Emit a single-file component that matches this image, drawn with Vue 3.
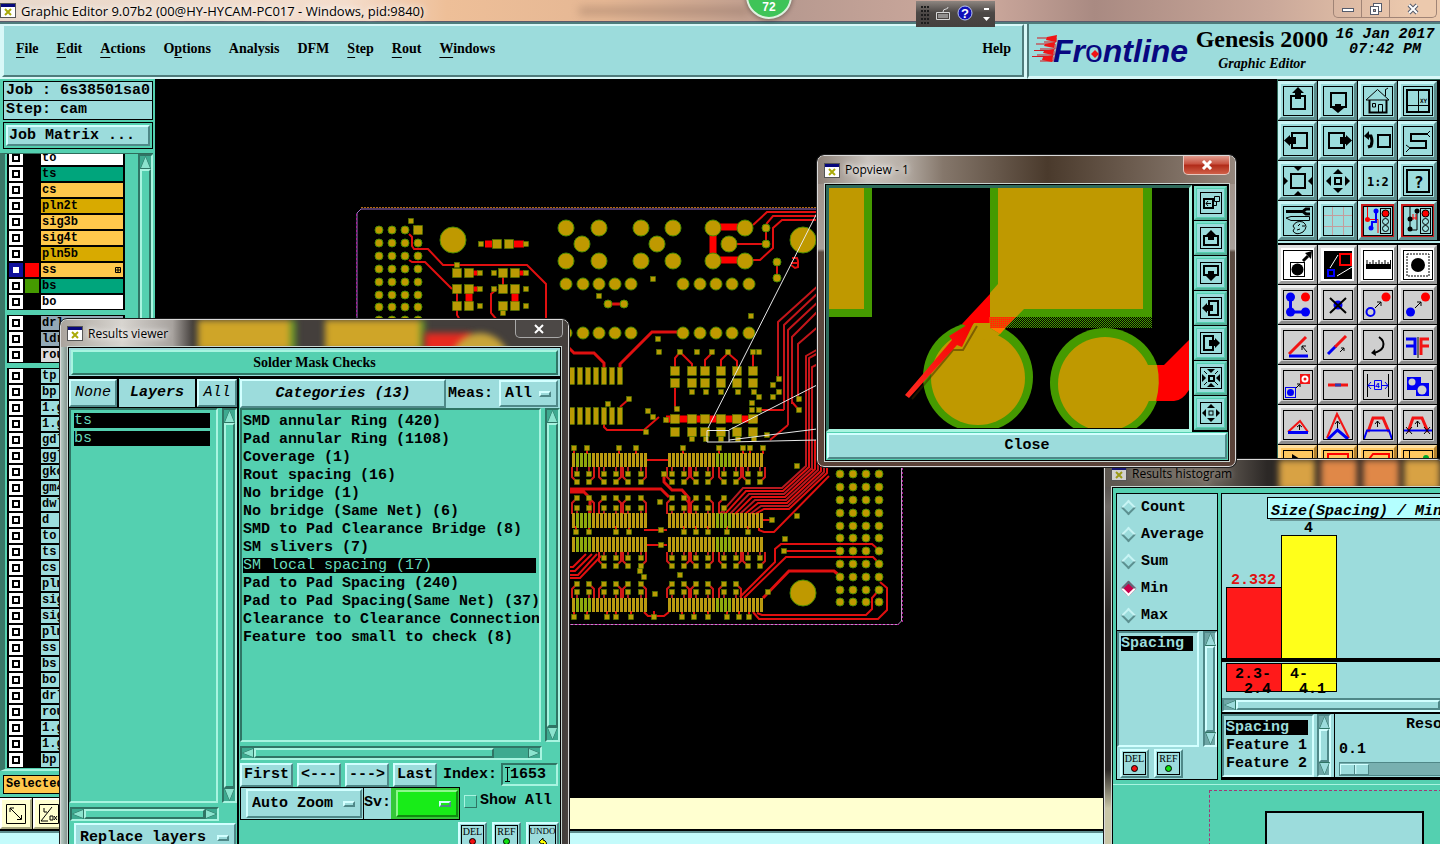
<script setup>
import { ref } from 'vue'

const menus = [
  ['', 'F', 'ile'], ['', 'E', 'dit'], ['', 'A', 'ctions'], ['O', 'p', 'tions'], ['Analysis', '', ''],
  ['DFM', '', ''], ['', 'S', 'tep'], ['', 'R', 'out'], ['', 'W', 'indows'],
]

const orange = '#ffc84c'
const gold = '#d8aa00'
const sea = '#00a57c'
const pale = '#9cdcdc'
const layerGroups = [
  [
    { n: 'to', c: '#fff' }, { n: 'ts', c: sea }, { n: 'cs', c: orange }, { n: 'pln2t', c: gold },
    { n: 'sig3b', c: orange }, { n: 'sig4t', c: orange }, { n: 'pln5b', c: gold },
    { n: 'ss', c: orange, s: '#f00', on: true, mark: true }, { n: 'bs', c: sea, s: '#459a00' }, { n: 'bo', c: '#fff' },
  ],
  [{ n: 'drl', c: '#94a9b6' }, { n: 'ldr', c: '#94a9b6' }, { n: 'rou', c: '#dcdcdc' }],
  ['tp', 'bp', '1.g', '1.g', 'gdl', 'ggl', 'gko', 'gm4', 'dwl', 'd', 'to', 'ts', 'cs', 'pln', 'sig', 'sig', 'pln', 'ss', 'bs', 'bo', 'drl', 'rou', '1.g', '1.g', 'bp'].map((n) => ({ n, c: pale })),
]

const categories = [
  'SMD annular Ring (420)', 'Pad annular Ring (1108)', 'Coverage (1)', 'Rout spacing (16)', 'No bridge (1)',
  'No bridge (Same Net) (6)', 'SMD to Pad Clearance Bridge (8)', 'SM slivers (7)', 'SM local spacing (17)',
  'Pad to Pad Spacing (240)', 'Pad to Pad Spacing(Same Net) (37)', 'Clearance to Clearance Connection', 'Feature too small to check (8)',
]
const selectedCategory = ref(8)
const stats = ['Count', 'Average', 'Sum', 'Min', 'Max']
const stat = ref('Min')
const index = ref('1653')
const showAll = ref(false)

const box = (x, y, w, h) => `<rect x="${x}" y="${y}" width="${w}" height="${h}" fill="none" stroke="#000" stroke-width="2"/>`
const poly = (p, c = '#000') => `<polygon points="${p}" fill="${c}"/>`
const line = (d, c = '#000', w = 1) => `<path d="${d}" fill="none" stroke="${c}" stroke-width="${w}"/>`
const dot = (x, y, r, c) => `<circle cx="${x}" cy="${y}" r="${r}" fill="${c}"/>`
const label = (x, y, s, t) => `<text x="${x}" y="${y}" font-size="${s}" font-weight="bold" font-family="DejaVu Sans Mono, monospace">${t}</text>`
const light = (x) => `<rect x="${x}" y="2.500" width="10" height="25" fill="#9cdcdc" stroke="#000"/>` + `<circle cx="${x + 5}" cy="7.500" r="3.500" fill="#f00" stroke="#000"/><circle cx="${x + 5}" cy="15.500" r="3" fill="none" stroke="#000"/><circle cx="${x + 5}" cy="22.500" r="3" fill="none" stroke="#000"/>`

const viewTools = [
  { t: 'Pan up', i: box(8, 10, 14, 13) + poly('15,1 21,7 18,7 18,13 12,13 12,7 9,7') },
  { t: 'Pan down', i: box(8, 7, 15, 14) + poly('15,27 21,22 18,22 18,18 12,18 12,22 9,22') },
  { t: 'Home', i: line('M3 14L14.500 3.500L26 14H3M22.500 10V4M22 4L25 2M6.500 14V26.500H23.500V14M15.500 26V18.500H19.500V26M9.500 17.500H12.500V21H9.500Z', '#000', 1) + line('M6.500 14V26.500H23.500V14', '#000', 2) },
  { t: 'Zoom area', i: box(4, 4, 22, 22) + line('M15.500 4V26M4 19.500H26') + '<text x="17" y="17" font-size="6" font-family="DejaVu Sans Mono, monospace">XY</text>' },
  { t: 'Pan left', i: box(9, 7, 15, 15) + poly('1,14.500 7,9 7,11 13,11 13,18 7,18 7,20') },
  { t: 'Pan right', i: box(6, 7, 15, 15) + poly('29,14.500 23,9 23,11 17,11 17,18 23,18 23,20') },
  { t: 'Previous view', i: box(15, 9, 12, 12) + line('M4 10H8Q10 15 8 20L5 21', '#000', 3) + poly('1,10 6,5 6,14') },
  { t: 'Serpent', i: line('M24 8H8V15H23V22H7', '#000', 2) + line('M24 8L27 5M24 8L27 11M7 22L3 19M7 22L3 26') },
  { t: 'Zoom in', i: box(8, 8, 14, 14) + poly('10,0 20,0 15,5') + poly('10,30 20,30 15,25') + poly('0,10 0,20 5,15') + poly('30,10 30,20 25,15') },
  { t: 'Zoom out', i: box(12, 12, 6, 6) + poly('10,8 20,8 15,3') + poly('10,22 20,22 15,27') + poly('8,10 8,20 3,15') + poly('22,10 22,20 27,15') },
  { t: 'Scale', i: label(4, 20, 12, '1:2') },
  { t: 'Help', i: box(4, 4, 22, 22) + label(11, 22, 16, '?') },
  { t: 'Setup', i: line('M3 5.500H20M20 5.500L23 3H27M20 5.500L23 8H27', '#000', 3) + line('M3 12L8 10.500H26.500V14.500H8Z') + line('M10 20Q13 14 20 16Q26 20 20 26Q13 30 10 25Q13 22 10 20M15 20L17 18M19 20H22M14 24L17 23') },
  { t: 'Grid', i: line('M0 9.500H30M0 20.500H30M9.500 0V30M20.500 0V30', '#c49c9c') },
  { t: 'Net display', red: true, i: line('M4.500 0V14M4.500 13.500H15V27', '#f00') + line('M13 5V16H9V21', '#00f', 2) + dot(4.5, 13.5, 2.5, '#f00') + dot(13, 5, 2.5, '#00f') + dot(8, 22, 2.5, '#00f') + light(17.5) },
  { t: 'Net stop', red: true, i: line('M7 0V22M14 5V24H8') + line('M8 12H14M10 8V14M13 8V14', '#f00') + dot(7, 13, 2.500, '#000') + dot(14, 5, 2.500, '#000') + dot(7, 23, 2.500, '#000') + light(17.5) },
]

const ring = (x, y, r, c, w = 2) => `<circle cx="${x}" cy="${y}" r="${r}" fill="none" stroke="${c}" stroke-width="${w}"/>`
const B = '#0000f5'
const R = '#f21414'
const editTools = [
  { k: 'white', i: '<rect x="7.500" y="12.500" width="14" height="14" fill="none" stroke="#000"/>' + dot(14.5, 19.5, 6, '#000') + line('M20 11L25 6', '#000', 3) + poly('22,3 29,1 28,9') },
  { k: 'dark', i: '<rect width="30" height="30" fill="#000"/>' + line('M7 18L15 5M14 26L29 17', '#fff') + '<rect x="17" y="4" width="11" height="11" fill="none" stroke="#f00" stroke-width="2"/><rect x="5" y="20" width="6" height="6" fill="none" stroke="#00f" stroke-width="2"/>' },
  { k: 'white', i: '<rect x="3" y="14" width="25" height="5" fill="#000"/>' + line('M4 14V10M7 14V12M10 14V10M13 14V12M16 14V10M19 14V12M22 14V10M25 14V12M27.500 14V10') },
  { k: 'white', i: dot(15, 15, 7, '#000') + '<rect x="4" y="4" width="22" height="22" fill="none" stroke="#000" stroke-dasharray="2 1"/>' },
  { i: line('M7.500 7V22H23', B, 3) + dot(7.5, 7, 4.5, B) + dot(7.5, 22, 4.5, B) + dot(22.5, 22, 4.5, B) + dot(22.5, 7, 4.5, '#f00') },
  { i: dot(15, 15, 4.500, B) + line('M7 8L23 23M23 8L7 23', '#000', 2) },
  { i: ring(7.5, 22, 4, B) + dot(23, 7, 4.500, '#f00') + line('M12 18L18 12M14 12H18V16') },
  { i: dot(7.5, 22, 4.5, B) + dot(22.500, 7, 4.500, '#f00') + line('M12 18L18 12M14 12H18V16') },
  { i: line('M6 24L23 7', R, 3) + line('M6 26H25', B, 3) + line('M24 22L19 16M19 20V16H23') },
  { i: line('M5 24L13 16', B, 3) + line('M12 17L23 6', R, 3) + line('M17 22L21 18M18 18H21V21') },
  { i: line('M16 7Q22 11 20 17Q18 21 11 23', '#000', 2) + poly('8,23 12,19 13,26') },
  { i: line('M3 9H12V25M3 16H12', B, 3) + line('M26 9H18V25M26 16H18', R, 3) + line('M15 7V28') },
  { i: '<rect x="17" y="4" width="10" height="10" fill="#f21414"/><rect x="2.500" y="17.500" width="10" height="10" fill="none" stroke="#0000f5"/>' + ring(22, 9, 2.5, '#fff') + dot(7.500, 22.500, 3.500, B) + line('M13 18L17 14M14 14H17V17') },
  { i: line('M5 15H25', R, 3) + line('M12 15H18', '#303ab0', 3) },
  { i: line('M4.500 4V27M25.500 4V27') + line('M5 15.500H11M19 15.500H25M8 12L5 15.500L8 19M22 12L25 15.500L22 19M11.500 10.500H18.500V19.500H11.500Z', B) + '<text x="12" y="18" font-size="8" font-weight="bold" fill="#0000f5">4</text>' },
  { i: '<path d="M4 7H18V13H26V26H13V20H4Z" fill="#0000f5"/>' + dot(9, 12, 3.500, '#cfcfcf') + dot(19, 20, 4.500, '#cfcfcf') },
  { i: line('M5 22L17 11L25 22', R, 2) + line('M5 22.500H25', B, 3) + line('M16.500 20V15M14 17L16.500 15L19 17') },
  { i: line('M4 28L14 4L26 28', R, 2) + line('M5 29L14.500 20L25 29', B, 3) + line('M14.500 18V11M12 14L14.500 11L17 14') },
  { i: line('M5 22L10 8H20L26 22', R, 3) + line('M1 29L4 20.500H26L29 29', B, 2) + line('M14.500 17V11M12 14L14.500 11L17 14') },
  { i: line('M5 22L10 8H19L25 22', R, 3) + line('M1 20.500H29', B, 2) + line('M14.500 17V11M12 14L14.500 11L17 14M3 17L9 24M9 17L3 24M21 17L27 24M27 17L21 24') },
  { k: 'amber', i: poly('9,4 17,9 14,10 16,15 13,15 11,11 9,13') },
  { k: 'amber', i: '<rect x="5" y="4" width="20" height="20" fill="none" stroke="#f00" stroke-width="2"/>' + poly('12,8 20,13 14,16') },
  { k: 'amber', i: line('M3 13L10 4H26V20', '#f00', 2) + poly('12,8 20,13 14,16') },
  { k: 'amber', i: line('M6.500 0V30M6 12H20') + dot(23, 8, 3, '#00a82a') },
]

const popTools = [
  { t: 'Link view', i: line('M3 6H12V15H3Z', '#000', 2) + line('M10 10.500H5M7 8L5 10.500L7 13M13.500 3.500H18.500V8.500H13.500ZM15.500 9V12.500H12') },
  { t: 'Pan up', i: box(3, 8, 14, 9) + poly('10,2 15,7 13,7 13,12 7,12 7,7 5,7') },
  { t: 'Pan down', i: box(3, 3, 14, 9) + poly('10,18 15,13 13,13 13,8 7,8 7,13 5,13') },
  { t: 'Pan left', i: box(8, 3, 9, 14) + poly('1,10 6,5 6,7 12,7 12,13 6,13 6,15') },
  { t: 'Pan right', i: box(3, 3, 9, 14) + poly('19,10 14,5 14,7 8,7 8,13 14,13 14,15') },
  { t: 'Zoom in', i: box(8, 8, 5, 5) + poly('6,1 14,1 10,5') + poly('6,19 14,19 10,15') + poly('1,6 1,14 5,10') + poly('19,6 19,14 15,10') + line('M3 3L6 6M17 3L14 6M3 17L6 14M17 17L14 14') },
  { t: 'Zoom out', i: '<rect x="8" y="8" width="4" height="4" fill="none" stroke="#000"/>' + poly('6,5 14,5 10,1') + poly('6,15 14,15 10,19') + poly('5,6 5,14 1,10') + poly('15,6 15,14 19,10') },
]

/* ---- board artwork, in canvas coordinates ---- */
const circles = []
const pads = []
const traces = []
const grid = (xs, ys, fn) => ys.forEach((y) => xs.forEach((x) => fn(x, y)))
const circle = (r) => (x, y) => circles.push({ x, y, r })
const pad = (w, h = w) => (x, y) => pads.push({ x: x - w / 2, y: y - h / 2, w, h, c: '#b99a04', s: '#4f8500' })
const trace = (d, w = 2, c = '#e01010') => traces.push({ d, w, c })

grid([379, 392, 405, 418], [230, 243, 256, 269, 282, 295, 307, 320], circle(4))
grid([840, 853, 866, 879], [474, 487, 500, 513, 526, 538, 551, 564, 577, 590, 602], circle(4))
grid([418], [230], pad(9))
grid([566, 599, 641, 673, 713, 745], [228, 261], circle(8))
grid([582, 657, 729], [244], circle(8))
grid([566, 583, 599, 615, 631, 683, 700, 716, 732, 749], [284, 333], circle(6))
circle(13)(453, 240)
circle(13)(803, 240)
circle(13)(803, 593)
grid([766], [228, 244], circle(4))
grid([777], [262, 278], circle(4))
grid([608, 624], [304], circle(4))
grid([497, 509], [244], pad(9))
grid([457, 469, 503, 515], [273, 289, 306], pad(9))
grid([480, 494, 526], [273, 289], pad(5))
grid([480, 526], [306], pad(5))
grid([481, 526], [244], pad(5))
;[[411, 221], [457, 265], [503, 313], [653, 279], [599, 296], [751, 316], [658, 339], [659, 352], [779, 379], [773, 385], [779, 392], [773, 397], [759, 397], [752, 403], [752, 410], [759, 410], [799, 399], [799, 410], [629, 399], [608, 404], [648, 411], [653, 417], [646, 432], [677, 409], [666, 420], [767, 435], [797, 466], [797, 516], [785, 539], [784, 551], [680, 575], [655, 594], [768, 592], [660, 502], [772, 520], [661, 530], [661, 545], [664, 474], [640, 571], [644, 577]].forEach(([x, y]) => pad(5)(x, y))
grid([675, 692, 705, 721, 737, 753], [371, 383, 419, 432], pad(9))
grid([692, 706, 721, 738, 754], [392, 439], pad(5))
grid([680, 697, 712, 728, 753, 759], [352], pad(5))
grid([572, 580, 588, 596, 604, 612, 620], [376, 416], pad(5, 17))

const z = (xs) => xs.map((v) => Math.round(560 + v / 3))
const leftX = z([51, 87, 133, 169, 205, 242])
const rightX = z([336, 372, 409, 445, 492, 528, 565, 600])
;[[453, 467], [513, 528], [537, 552], [598, 612]].forEach(([a, b]) => {
  const strip = (x0, x1, g0, g1) => {
    for (let x = x0; x < x1; x += 4) pads.push({ x, y: a, w: 3, h: b - a, c: x > g0 && x < g1 ? '#8fa80c' : '#b99a10', s: 'none' })
  }
  strip(572, 645, 574, 592)
  strip(668, 763, 714, 732)
})
const fan = (xs, near, far, edge) => {
  xs.forEach((x, n) => {
    const s = n % 2 ? 5 : -5
    const dir = Math.sign(edge - far)
    trace(`M${x} ${near}V${edge}`, 2, '#a81c20')
    trace(`M${x} ${far}L${x + s} ${far + dir * 5}V${edge}`, 2, '#d01818')
    pad(5)(x, near)
    pad(5)(x, far)
  })
}
fan([...leftX, ...rightX], 474, 482, 467)
fan([...leftX, ...rightX.slice(0, 5)], 508, 498, 514)
fan([...leftX.slice(2), ...rightX], 558, 566, 552)
fan([...leftX, ...rightX.slice(0, 6)], 592, 584, 598)
const via = (xs, y, edge) => z(xs).forEach((x) => { trace(`M${x} ${y}V${edge}`); pad(5)(x, y) })
via([43, 80, 177, 229, 369, 478, 548, 571, 608], 448, 454)
via([48, 87, 169, 207, 372, 409, 445, 500, 565], 532, 526)
via([43, 80, 141, 169, 214, 283, 365, 402, 445, 500, 536, 568], 617, 611)

trace('M409 234L412 237V246L414 249H428L443 265H527L546 284V320')
trace('M409 260L412 262H425L452 289')
trace('M457 290V315L460 320M503 273V289M497 289L491 294V313L497 320')
trace('M485 244H492M514 244H524', 7, '#f00')
trace('M469 291V303M515 291V303', 7, '#f00')
trace('M473 273H478M473 289H478M519 273H524', 5, '#f00')
trace('M713 227H745M713 228V260M713 260H745', 7, '#f00')
trace('M729 244H766M766 228V244M777 262V278', 2)
trace('M753 225L767 212H820M767 226V223L773 216H820M745 260H760L773 248V228L782 220H820')
trace('M608 304H624', 3)
trace('M568 347L574 353H594L604 363V370M620 368V364L652 332H683', 3)
trace('M620 407L629 399M604 424V427L607 430H644L659 417')
trace('M675 370V358L680 352L692 364V370M705 370V360L712 353M721 370V360L728 353L737 361V370M753 370V352M675 388V410')
trace('M666 419H758', 7, '#f00')
trace('M792 258H797L798 261V267L795 268L791 265M791 263H797', 2)
;[[778, 322, 284, 379], [784, 325, 291, 410], [788, 330, 300, 425], [792, 337, 309, 404], [798, 344, 325, 402], [806, 356, 348, 466], [809, 358, 352, 468], [812, 367, 363, 470]].forEach(([x, y, top, bottom]) => trace(`M820 ${top}L${x} ${y}V${bottom}`, 2, '#c2161a'))
trace('M784 410H759M788 425L770 440M792 402L799 410')
for (let n = 0; n < 8; n++) {
  const k = n * 3
  trace(`M${806 + k} 440V${466 + n}L${782 + n} ${488 + k}H${743 + n * 3}L${720 + n * 5} 514`, 2, n % 2 ? '#e01010' : '#b81a20')
}
trace('M759 528V530L764 532H774L829 476M645 460H668M644 530H667M645 545H667M763 520H772')
trace('M570 489H661L669 497M664 474V482L672 490H682L689 498V513M570 492H584L590 498V513', 3)
trace('M740 597L775 562V549L781 544H872L879 550M784 551H840M744 598L786 557H873L879 563')
trace('M763 598L789 571H834L840 576', 3)
trace('M753 612L759 619H878L887 610V588L880 582M757 613L762 615H866L872 609V598L879 590M644 612L648 616H664L669 612')
trace('M570 567H573L586 554M570 571H575L592 554M570 575H578L597 554M570 578H580L601 556')
</script>

<template>
  <div class="desktop">
    <header class="titlebar">
      <svg class="xicon" width="16" height="15" viewBox="0 0 16 15" aria-hidden="true"><rect x="0.500" y="0.500" width="15" height="14" fill="#fff" stroke="#555" /><rect x="1" y="1" width="14" height="3" fill="#08087c" /><path d="M5 6L11 12M11 6L5 12" stroke="#aaaa08" stroke-width="2" /></svg>
      <span class="title">Graphic Editor 9.07b2 (00@HY-HYCAM-PC017 - Windows, pid:9840)</span>
      <span class="ghost"></span>
      <div class="caption">
        <button aria-label="Minimize"><svg width="14" height="12"><rect x="1.500" y="5.500" width="11" height="3" fill="#fff" stroke="#555b6b" /></svg></button>
        <button aria-label="Restore"><svg width="14" height="14"><rect x="4.500" y="1.500" width="8" height="8" fill="#fff" stroke="#555b6b" /><rect x="1.500" y="4.500" width="8" height="8" fill="#fff" stroke="#555b6b" /><rect x="4.500" y="7.500" width="2" height="2" fill="#c9a693" stroke="#555b6b" /></svg></button>
        <button aria-label="Close window"><svg width="14" height="12"><path d="M3 2L11 10M11 2L3 10" stroke="#555b6b" stroke-width="4" /><path d="M3 2L11 10M11 2L3 10" stroke="#fff" stroke-width="2" /></svg></button>
      </div>
    </header>

    <div class="top">
      <nav class="menu">
        <a v-for="m in menus" :key="m.join('')" href="#">{{ m[0] }}<u v-if="m[1]">{{ m[1] }}</u>{{ m[2] }}</a>
        <a class="help" href="#">Help</a>
      </nav>
      <div class="brand">
        <svg class="logo" width="162" height="46" viewBox="0 0 162 46">
          <path d="M5 12H24V16H12M4 18H23V23H8M2 24.500H22V29H5M0 30.500H21V35H8" fill="none" stroke="#d01820" />
          <path d="M15 11L25 9L24 16L14 14ZM13 18L23 16L22 22L12 20ZM12 25L22 23L21 29L11 27ZM11 31L21 29L20 36L10 34Z" fill="#f01414" />
          <text x="21" y="36" class="word">Fr<tspan class="o">o</tspan>ntline</text>
          <path d="M63 24L67 28L63 32L59 28Z" fill="#f01414" />
        </svg>
        <div class="product"><strong>Genesis 2000</strong><em>Graphic Editor</em></div>
        <time>16 Jan 2017<br />07:42 PM</time>
      </div>
    </div>

    <div class="work">
      <aside class="sidebar">
        <div class="info">Job : 6s38501sa0</div>
        <div class="info">Step: cam</div>
        <div class="jobwrap"><button class="raised jobmatrix">Job Matrix ...</button></div>
        <div class="layerpane">
          <div class="layers">
            <div v-for="(g, gi) in layerGroups" :key="gi" class="lgroup">
              <label v-for="(l, li) in g" :key="li" class="lrow">
                <input type="checkbox" :checked="l.on" />
                <span class="swatch" :style="{ background: l.s || '#000' }"></span>
                <span class="lname" :style="{ background: l.c }">{{ l.n }}<svg v-if="l.mark" width="6" height="6"><path d="M0.500 0.500H5.500V5.500H0.500ZM3 0V6M0 3H6" fill="none" stroke="#000" /></svg></span>
              </label>
            </div>
          </div>
          <div class="vscroll"><i class="up"></i><b></b></div>
        </div>
        <div class="selected">Selected</div>
      </aside>

      <main class="canvas">
        <svg width="1122" height="719" viewBox="155 79 1122 719">
          <path v-for="(t, n) in traces" :key="'t' + n" :d="t.d" :stroke="t.c" :stroke-width="t.w" fill="none" />
          <circle v-for="(c, n) in circles" :key="'c' + n" :cx="c.x" :cy="c.y" :r="c.r" fill="#bf9900" stroke="#4a8c00" />
          <rect v-for="(p, n) in pads" :key="'p' + n" :x="p.x" :y="p.y" :width="p.w" :height="p.h" :fill="p.c" :stroke="p.s" stroke-width="0.500" />
          <path d="M357 625V213L361 209H902" fill="none" stroke="#a070c8" stroke-width="1" />
          <path d="M361 207.500H902" stroke="#b26a10" stroke-dasharray="2 1" />
          <path d="M357 624.500H898L901.500 621V208" fill="none" stroke="#b89cc0" stroke-width="1" />
          <path d="M357 624.500H900M356.500 214V624M902.500 208V622" stroke="#b0189a" stroke-dasharray="2 2" fill="none" />
          <path d="M817 213L708 428M707 430.500H729V442H707ZM729 430L817 385M729 440L817 429M729 442L817 440" fill="none" stroke="#e8e8e8" />
        </svg>
      </main>

      <aside class="tools">
        <div class="tgrid cyan">
          <button v-for="t in viewTools" :key="t.t" class="tool" :class="{ red: t.red }" :aria-label="t.t"><svg width="30" height="30" viewBox="0 0 30 30" v-html="t.i"></svg></button>
        </div>
        <div class="tgrid grey">
          <button v-for="(t, n) in editTools" :key="n" class="tool" :class="t.k" :aria-label="'Edit tool ' + (n + 1)"><svg width="30" height="30" viewBox="0 0 30 30" v-html="t.i"></svg></button>
        </div>
      </aside>
    </div>

    <footer class="foot">
      <div class="creambar">
        <button aria-label="Snap mode"><svg width="20" height="20"><path d="M0.500 0.500H19.500V19.500H0.500ZM4 4L15 15M4 8V4H8M11 15.500H15.500V11" fill="none" stroke="#000" /></svg></button>
        <button aria-label="Angle mode"><svg width="20" height="20"><path d="M0.500 0.500H19.500V19.500H0.500ZM2 17L13 3M2 17H9M5 4V8H8M11 12H14V16H11ZM15 12L18 16M18 12L15 16" fill="none" stroke="#000" /></svg></button>
      </div>
      <div class="message"></div>
    </footer>

    <!-- floating desktop items -->
    <div class="badge">72</div>
    <div class="langbar">
      <svg width="79" height="26" viewBox="0 0 79 26">
        <path d="M5 6H13M5 10H13M5 14H13M5 18H13M5 22H13" stroke="#1d1d1d" stroke-width="2" stroke-dasharray="2 1" />
        <path d="M20.500 11.500H33.500V18.500H20.500ZM22 14H32M22 16H32M27 11Q27 8 30 8Q32 8 32 6" fill="none" stroke="#d8d8d8" />
        <circle cx="49" cy="12" r="7" fill="#1010b8" stroke="#b8c4f0" /><text x="45" y="17" font-size="13" font-weight="bold" fill="#fff" font-family="Liberation Sans, sans-serif">?</text>
        <path d="M68 8H73" stroke="#fff" stroke-width="2" /><path d="M67 16H74L70.500 20Z" fill="#fff" />
      </svg>
    </div>

    <section class="win results">
      <div class="wbar">
        <span class="blob b1"></span><span class="blob b2"></span><span class="blob b3"></span><span class="blob b4"></span>
        <svg class="xicon" width="16" height="15" viewBox="0 0 16 15" aria-hidden="true"><rect x="0.500" y="0.500" width="15" height="14" fill="#fff" stroke="#555" /><rect x="1" y="1" width="14" height="3" fill="#08087c" /><path d="M5 6L11 12M11 6L5 12" stroke="#aaaa08" stroke-width="2" /></svg>
        <span class="wtitle">Results viewer</span>
        <button class="wclose" aria-label="Close results"><svg width="12" height="10"><path d="M2 1L10 9M10 1L2 9" stroke="#fff" stroke-width="2" /></svg></button>
      </div>
      <div class="client">
        <div class="heading"><span>Solder Mask Checks</span></div>
        <div class="cols">
          <div class="lcol">
            <div class="lhead"><button class="raised it">None</button><span class="layerlabel">Layers</span><button class="raised it">All</button></div>
            <div class="listrow">
              <ul class="list"><li class="sel">ts</li><li class="sel">bs</li></ul>
              <div class="vscroll"><i class="up"></i><b></b><i class="down"></i></div>
            </div>
            <div class="hscroll lh"><i class="left"></i><b></b><i class="right"></i></div>
            <div class="opt replace"><select aria-label="Layer action"><option>Replace layers</option></select></div>
          </div>
          <div class="rcol">
            <div class="rhead">
              <button class="raised cat">Categories (13)</button>
              <label for="meas">Meas:</label>
              <div class="opt all"><select id="meas"><option>All</option></select></div>
            </div>
            <div class="listrow">
              <ul class="list cats"><li v-for="(c, n) in categories" :key="c" :class="{ sel: n === selectedCategory }" @click="selectedCategory = n">{{ c }}</li></ul>
              <div class="vscroll"><i class="up"></i><b></b><i class="down"></i></div>
            </div>
            <div class="hscroll rh"><i class="left"></i><b></b><s></s><i class="right"></i></div>
            <div class="nav">
              <button class="raised">First</button><button class="raised">&lt;---</button><button class="raised">---&gt;</button><button class="raised">Last</button>
              <label for="idx">Index:</label><div class="idx"><svg width="5" height="15"><path d="M0 0.500H5M0 14.500H5M2.500 0V15" stroke="#000" /></svg><input id="idx" v-model="index" /></div>
            </div>
            <div class="zoomrow">
              <div class="zbox"><div class="opt zoom"><select aria-label="Zoom mode"><option>Auto Zoom</option></select></div></div>
              <div class="svbox"><label for="sv">Sv:</label><div class="green"><div class="opt"><select id="sv"><option></option></select></div></div></div>
              <label class="show"><input v-model="showAll" type="checkbox" />Show All</label>
            </div>
            <div class="acts">
              <button class="act">DEL<span class="led r"></span></button><button class="act">REF<span class="led g"></span></button>
              <button class="act">UNDO<svg width="14" height="12"><path d="M3 5L7 1V3Q12 4 10 11H7Q9 7 7 6V8Z" fill="#ff0" stroke="#000" /></svg></button>
            </div>
          </div>
        </div>
      </div>
    </section>

    <section class="win histo">
      <div class="wbar">
        <span class="blob h1"></span><span class="blob h2"></span><span class="blob h3"></span><span class="blob h4"></span>
        <svg class="xicon" width="16" height="15" viewBox="0 0 16 15" aria-hidden="true"><rect x="0.500" y="0.500" width="15" height="14" fill="#eee" stroke="#555" /><rect x="1" y="1" width="14" height="3" fill="#08087c" /><path d="M5 6L11 12M11 6L5 12" stroke="#aaaa08" stroke-width="2" /></svg>
        <span class="wtitle">Results histogram</span>
      </div>
      <div class="client">
        <div class="hmain">
          <div class="hleft">
            <div class="radios"><label v-for="s in stats" :key="s"><input v-model="stat" type="radio" name="stat" :value="s" />{{ s }}</label></div>
            <div class="listrow"><ul class="list"><li class="sel">Spacing</li></ul><div class="vscroll"><i class="up"></i><b></b><i class="down"></i></div></div>
            <div class="acts"><button class="act">DEL<span class="led r"></span></button><button class="act">REF<span class="led g"></span></button></div>
          </div>
          <div class="hright">
            <div class="chart">
              <svg width="400" height="204" viewBox="1222 494 400 204">
                <rect x="1270" y="501" width="300" height="20" fill="#6c9a9a" />
                <rect x="1267.500" y="497.500" width="300" height="21" fill="#b4ffff" stroke="#000" />
                <text x="1271" y="515" class="ital">Size(Spacing) / Min</text>
                <rect x="1226.500" y="587.500" width="55" height="73" fill="#ff1a1a" stroke="#000" /><rect x="1281.500" y="535.500" width="55" height="125" fill="#ffff1a" stroke="#000" />
                <text x="1304" y="532">4</text><text x="1231" y="584" fill="#e01010">2.332</text>
                <path d="M1221 660H1621" stroke="#000" stroke-width="4" />
                <rect x="1226.500" y="663.500" width="55" height="28" fill="#ff1a1a" stroke="#000" /><rect x="1281.500" y="663.500" width="55" height="28" fill="#ffff1a" stroke="#000" />
                <text x="1235" y="678">2.3-</text><text x="1244" y="693">2.4</text><text x="1290" y="678">4-</text><text x="1299" y="693">4.1</text>
              </svg>
            </div>
            <div class="hscroll"><i class="left"></i><b></b></div>
            <div class="hlow">
              <ul class="list"><li class="sel">Spacing</li><li>Feature 1</li><li>Feature 2</li></ul>
              <div class="vscroll"><i class="up"></i><b></b><i class="down"></i></div>
              <div class="reso"><label for="res">Reso</label><output for="res">0.1</output><input id="res" type="range" min="0" max="100" value="0" /></div>
            </div>
          </div>
        </div>
        <div class="hbottom"><div class="dash"><div class="preview"></div></div></div>
      </div>
    </section>

    <section class="win pop">
      <div class="wbar">
        <svg class="xicon" width="16" height="15" viewBox="0 0 16 15" aria-hidden="true"><rect x="0.500" y="0.500" width="15" height="14" fill="#fff" stroke="#555" /><rect x="1" y="1" width="14" height="3" fill="#08087c" /><path d="M5 6L11 12M11 6L5 12" stroke="#aaaa08" stroke-width="2" /></svg>
        <span class="wtitle">Popview - 1</span>
        <button class="wclose" aria-label="Close popview"><svg width="12" height="10"><path d="M2 1L10 9M10 1L2 9" stroke="#fff" stroke-width="3" /></svg></button>
      </div>
      <div class="client">
        <div class="pview">
          <svg class="pcanvas" width="361" height="240" viewBox="829 188 361 240">
            <defs>
              <pattern id="hatch" width="2" height="2" patternUnits="userSpaceOnUse"><rect width="1" height="1" fill="#459a00" /><rect x="1" y="1" width="1" height="1" fill="#459a00" /></pattern>
              <pattern id="hatch2" width="2" height="2" patternUnits="userSpaceOnUse"><rect width="2" height="2" fill="#ff3000" /><rect width="1" height="1" fill="#c07000" /></pattern>
              <linearGradient id="ar" x1="0" y1="1" x2="1" y2="0"><stop offset="0" stop-color="#ff2a20" /><stop offset="1" stop-color="#f40000" /></linearGradient>
            </defs>
            <path d="M828 188H872V317H828Z" fill="#459a00" /><path d="M828 188H864V309H828Z" fill="#bf9900" />
            <path d="M990 188H1152V317H990Z" fill="#459a00" />
            <circle cx="978" cy="377" r="55" fill="#459a00" /><circle cx="978" cy="378" r="47" fill="#bf9900" />
            <path d="M962 324L990 294V323L970 328Z" fill="#f00" />
            <path d="M998 188H1143V309H1024L1000 334L990 322V293L998 284Z" fill="#bf9900" />
            <path d="M989 317H1016L1005 328H989Z" fill="url(#hatch2)" /><path d="M1016 317H1152V328H1005Z" fill="url(#hatch)" />
            <path d="M1005 328L1000 334L990 328Z" fill="#ff7800" /><path d="M974 323H990V328L1000 334L990 342L966 332Z" fill="#bf9900" />
            <circle cx="1105" cy="383" r="55" fill="#459a00" /><circle cx="1105" cy="384" r="47" fill="#bf9900" />
            <path d="M1157 365H1164L1189 340V390Q1182 401 1174 401H1155Z" fill="#f00" />
            <path d="M1140 365H1157Q1161 383 1156 401H1140Z" fill="#bf9900" />
            <path d="M912 399L953 350L963 350L977 326" stroke="#3b2600" stroke-width="2" fill="none" opacity="0.500" />
            <path d="M905 395L952 340L949 336L975 320L962 347L957 345L909 398Z" fill="url(#ar)" />
          </svg>
        </div>
        <div class="pbtns"><button v-for="t in popTools" :key="t.t" class="ptool" :aria-label="t.t"><svg width="20" height="20" viewBox="0 0 20 20" v-html="t.i"></svg></button></div>
        <button class="raised closebtn">Close</button>
      </div>
    </section>
  </div>
</template>

<style>
html, body { margin: 0; background: #000; }
</style>

<style scoped>
.desktop { position: relative; height: 100vh; overflow: hidden; display: flex; flex-direction: column; background: #000; color: #000; font: bold 15px/18px "Liberation Mono", monospace; --teal: #54d0b0; --cyan: #9cdcdc; }
.desktop *, .desktop *::before { box-sizing: border-box; }
button, select, input { font: inherit; color: inherit; margin: 0; padding: 0; border: 0; border-radius: 0; background: none; white-space: nowrap; }
select { appearance: none; }
a { color: inherit; text-decoration: none; }
ul { list-style: none; margin: 0; padding: 0; }
svg { display: block; flex: none; }

.titlebar { flex: none; height: 22px; display: flex; align-items: center; gap: 5px; background: linear-gradient(90deg, #e8d8cb 0, #f4ddcc 24%, #eebf98 31%, #e5b794 42%, #b89a90 55%, #ceaa9e 68%, #a98a82 76%, #c9a799 88%, #ecc9ad 98%); border-bottom: 1px solid #5b5b6b; }
.title { font: 13px/18px "Open Sans", sans-serif; white-space: nowrap; text-shadow: 0 0 6px #fff, 0 0 8px #fff; }
.ghost { width: 170px; height: 8px; margin-left: 150px; background: #7d5f50; opacity: 0.350; filter: blur(4px); }
.caption { margin-left: auto; display: flex; align-self: flex-start; height: 18px; margin-right: 3px; border: 1px solid #a08476; border-top: 0; border-radius: 0 0 5px 5px; }
.caption button { width: 28px; display: grid; place-items: center; border-right: 1px solid #a08476; }
.caption button:last-child { width: 46px; border: 0; }

.top { flex: none; height: 57px; display: flex; border-top: 2px solid #4f7c7c; background: #d8f8f8; }
.menu { flex: 1; display: flex; align-items: center; gap: 18px; margin: 0 3px 2px 2px; padding: 0 11px 4px 12px; background: var(--cyan); border: 2px solid #4f7c7c; border-top-color: #d8f8f8; border-left-color: #d8f8f8; font: bold 14px/18px "Liberation Serif", serif; }
.menu u { text-underline-offset: 4px; text-decoration-thickness: 1px; }
.help { margin-left: auto; }
.brand { flex: none; width: 413px; display: flex; padding-left: 3px; background: var(--cyan); border-left: 2px solid #4f7c7c; border-bottom: 3px solid #d8f8f8; }
.word { font: italic bold 32px "Liberation Sans", sans-serif; fill: #080880; }
.o { font-weight: normal; font-style: normal; }
.logo { margin-top: 2px; }
.product { display: flex; flex-direction: column; align-items: center; width: 136px; white-space: nowrap; font-family: "Liberation Serif", serif; }
.product strong { font-size: 24px; line-height: 30px; }
.product em { font-size: 14px; line-height: 20px; }
time { flex: 1; text-align: center; font-style: italic; line-height: 15px; padding-top: 3px; white-space: nowrap; }

.work { flex: 1; min-height: 0; display: flex; }
.sidebar { flex: none; width: 155px; padding: 2px 2px 4px 3px; display: flex; flex-direction: column; background: var(--teal); min-height: 0; }
.info { flex: none; height: 20px; margin-bottom: -1px; padding-left: 2px; border: 1px solid #000; background: var(--cyan); white-space: nowrap; overflow: hidden; }
.jobwrap { flex: none; height: 27px; margin-top: 3px; padding: 2px; border: 1px solid #000; }
.raised { background: var(--cyan); border: 2px solid; border-color: #d2ffff #4f8888 #4f8888 #d2ffff; text-align: center; }
.jobmatrix { width: 100%; height: 100%; text-align: left; padding-left: 1px; line-height: 17px; }
.layerpane { flex: 1; min-height: 0; margin-top: 4px; margin-left: -3px; display: flex; gap: 13px; border-left: 5px solid #3a7868; border-top: 1px solid #2f6b5b; border-bottom: 2px solid #a8f4e0; overflow: hidden; }
.layers { width: 120px; display: flex; flex-direction: column; gap: 5px; padding-left: 2px; margin-top: -4px; }
.lgroup { background: #000; border-right: 2px solid #000; padding-left: 2px; }
.lrow { height: 16px; display: flex; align-items: center; gap: 2px; }
.lrow input { appearance: none; width: 14px; height: 14px; border: 2px solid #fff; background: #fff; outline: 2px solid #000; outline-offset: -5px; }
.lrow input:checked { border: 4px solid #10109c; outline: none; }
.swatch { width: 14px; height: 14px; }
.lname { flex: 1; height: 14px; display: flex; justify-content: space-between; align-items: center; padding: 0 2px 0 1px; font-size: 12px; line-height: 14px; white-space: nowrap; }
.selected { flex: none; height: 19px; margin-top: 4px; padding-left: 2px; border: 1px solid #000; background: #ffc84c; font-size: 12px; line-height: 17px; }
.canvas { flex: 1; min-width: 0; overflow: hidden; }

.vscroll { flex: none; width: 15px; display: flex; flex-direction: column; background: #3eaa90; border: 2px solid; border-color: #2f7565 #a8f4e0 #a8f4e0 #2f7565; }
.vscroll b { flex: 1; background: var(--teal); border: 2px solid; border-color: #a8f4e0 #2f7565 #2f7565 #a8f4e0; }
.hscroll { flex: none; height: 14px; display: flex; background: #3eaa90; border: 2px solid; border-color: #2f7565 #a8f4e0 #a8f4e0 #2f7565; }
.hscroll b { flex: 1; background: var(--teal); border: 2px solid; border-color: #a8f4e0 #2f7565 #2f7565 #a8f4e0; }
.hscroll s { flex: none; width: 34px; }
.vscroll i, .hscroll i { flex: none; width: 11px; height: 13px; background: #2f7565; position: relative; }
.hscroll i { height: 10px; width: 12px; }
.vscroll i::before, .hscroll i::before { content: ""; position: absolute; inset: 1px; background: #8be4ce; }
.up, .up::before { clip-path: polygon(50% 0, 100% 100%, 0 100%); }
.down, .down::before { clip-path: polygon(0 0, 100% 0, 50% 100%); }
.left, .left::before { clip-path: polygon(0 50%, 100% 0, 100% 100%); }
.right, .right::before { clip-path: polygon(0 0, 100% 50%, 0 100%); }

.tools { flex: none; width: 163px; background: #000; border-left: 1px solid #2f6b5b; display: flex; flex-direction: column; overflow: hidden; }
.tgrid { display: grid; grid-template-columns: repeat(4, 39px); gap: 1px; padding: 2px 0 0; }
.cyan { border-top: 1px solid #2f6b5b; padding-top: 1px; padding-bottom: 1px; border-bottom: 2px solid #b8ecec; }
.grey { padding-top: 2px; }
.tool { height: 39px; display: grid; place-items: center; background: var(--cyan); border: 3px solid; border-color: #c8f4f4 #5c8c8c #5c8c8c #c8f4f4; }
.tool svg { outline: 1px solid #000; outline-offset: -1px; }
.tool.red { background: #c82020; }
.tool.red svg { background: var(--cyan); }
.grey .tool { background: #cfcfcf; border-color: #f0f0f0 #8c8c8c #8c8c8c #f0f0f0; }
.grey .white, .grey .dark { background: #fff; border-color: #e0e0e0 #999 #999 #e0e0e0; }
.grey .dark svg { outline-color: #fff; }
.grey .amber { background: #ffc860; border-color: #ffe0a0 #b08030 #b08030 #ffe0a0; }

.foot { flex: none; }
.creambar { height: 33px; display: flex; gap: 1px; background: #ffffd0; border-bottom: 2px solid #000; }
.creambar button { width: 32px; display: grid; place-items: center; border: 2px solid; border-color: #fff #a8a880 #a8a880 #fff; outline: 1px solid #000; }
.message { height: 13px; background: #c4fbfb; border-top: 2px solid #5c8c8c; }

.badge { position: absolute; left: 746px; top: -27px; width: 46px; height: 46px; border-radius: 50%; border: 2px solid #dff0df; background: #3fc458; box-shadow: 0 1px 5px #0006; color: #fff; text-align: center; font: bold 12px/16px "Liberation Sans", sans-serif; padding-top: 24px; }
.langbar { position: absolute; left: 916px; top: 1px; background: linear-gradient(#8d8580, #4c4846 45%, #45403e); }

.win { position: absolute; border: 1px solid #d9d9d9; outline: 1px solid #1c1c1c; border-radius: 7px 7px 0 0; }
.wbar { position: relative; display: flex; align-items: center; gap: 5px; height: 27px; padding-left: 6px; overflow: hidden; border-radius: 6px 6px 0 0; }
.wtitle { position: relative; font: 12px/16px "Open Sans", sans-serif; text-shadow: 0 0 5px #fff, 0 0 8px #fff; }
.wbar .xicon { position: relative; }
.blob { position: absolute; top: 0; height: 30px; filter: blur(3px); }
.wclose { position: absolute; right: 5px; top: 0; width: 48px; height: 18px; display: grid; place-items: center; border: 1px solid #a9a9a9; border-top: 0; border-radius: 0 0 5px 5px; background: #4c4846; }
.client { position: relative; background: var(--teal); border: 1px solid #000; outline: 1px solid #c9d6d2; }

.results { left: 60px; top: 319px; bottom: -11px; width: 509px; display: flex; flex-direction: column; padding: 0 7px; background: linear-gradient(90deg, #b5c9c2, #8a9c96 1%, #3c3836 98%, #4a4340); }
.results .wbar { margin: 0 -7px; background: linear-gradient(90deg, #aaa49d 0, #d8d5d0 12%, #a7a29e 22%, #443f3c 26%, #443f3c 100%); }
.results .b1 { left: 137px; width: 98px; background: #cfa528; border-right: 6px solid #63952a; }
.results .b2 { left: 264px; width: 100px; background: #cfa528; border-right: 5px solid #63952a; }
.results .b3 { left: 364px; width: 46px; background: #e82a20; top: 13px; }
.results .b4 { left: 390px; width: 58px; background: #c9a53a; border-radius: 30px 30px 0 0; top: 13px; }
.results .client { flex: 1; min-height: 0; display: flex; flex-direction: column; }
.heading { flex: none; height: 30px; padding: 2px 2px 1px; background: var(--cyan); border-bottom: 2px solid #000; }
.heading span { display: block; height: 25px; border: 2px solid; border-color: #a8f4e0 #2f7565 #2f7565 #a8f4e0; background: var(--teal); text-align: center; font: bold 14px/21px "Liberation Serif", serif; }
.cols { flex: 1; min-height: 0; display: flex; }
.lcol { width: 170px; flex: none; display: flex; flex-direction: column; border-right: 2px solid #000; }
.rcol { flex: 1; min-width: 0; display: flex; flex-direction: column; padding-left: 1px; }
.lhead, .rhead { flex: none; height: 30px; display: flex; align-items: stretch; border-top: 1px solid #000; }
.lhead { background: #000; gap: 2px; padding-bottom: 1px; }
.lhead .it { width: 48px; flex: none; font-style: italic; font-weight: normal; }
.lhead .it:last-child { width: 40px; }
.layerlabel { flex: 1; display: grid; place-items: center; background: var(--cyan); font-style: italic; }
.rhead { background: var(--cyan); align-items: stretch; }
.cat { width: 206px; font-style: italic; }
.rhead label { padding: 6px 6px 0 2px; }
.listrow { flex: 1; min-height: 0; display: flex; gap: 4px; }
.list { flex: 1; min-width: 0; padding: 4px 6px 0 3px; border: 2px solid; border-color: #2f7565 #a8f4e0 #a8f4e0 #2f7565; overflow: hidden; }
.lcol .list { padding-top: 3px; }
.list li { height: 15px; margin-bottom: 3px; line-height: 15px; white-space: pre; }
.list .sel { background: #000; color: #68dcbe; }
.list.cats { padding: 4px 0 0 1px; }
.cats .sel { margin-right: 3px; }
.lcol .list .sel, .cats .sel { font-weight: normal; }
.lh { margin: 4px 18px 2px 1px; }
.rh { margin: 4px 18px 2px 0; }
.opt { position: relative; background: var(--cyan); border: 2px solid; border-color: #d2ffff #4f8888 #4f8888 #d2ffff; }
.opt select { display: block; width: 100%; height: 100%; padding-left: 4px; }
.opt::after { content: ""; box-sizing: border-box; position: absolute; right: 5px; top: 50%; width: 12px; height: 6px; margin-top: -3px; border: 2px solid; border-color: #d2ffff #4f8888 #4f8888 #d2ffff; pointer-events: none; }
.replace { flex: none; height: 30px; margin: 0 1px 0 5px; }
.all { flex: 1; margin: 1px 2px 1px 0; }
.nav { flex: none; height: 25px; display: flex; align-items: center; gap: 4px; }
.nav .raised { height: 24px; padding: 0 2px; }
.nav label { padding-left: 2px; }
.idx { flex: 1; min-width: 0; height: 23px; margin-right: 2px; display: flex; align-items: center; padding-left: 2px; border: 2px solid; border-color: #2f7565 #a8f4e0 #a8f4e0 #2f7565; }
.idx input { width: 45px; height: 16px; }
.zoomrow { flex: none; height: 33px; display: flex; }
.zbox { width: 124px; padding: 1px 1px 1px 5px; border: 1px solid #000; background: var(--cyan); }
.zoom { height: 29px; }
.svbox { width: 96px; display: flex; border: 1px solid #000; border-left: 0; background: var(--cyan); }
.svbox label { padding-top: 6px; }
.green { flex: 1; background: #34c838; padding: 2px 1px 2px 5px; }
.green .opt { height: 27px; background: #18ec18; border-color: #8cf88c #108c10 #108c10 #8cf88c; }
.show { display: flex; align-items: flex-start; gap: 3px; padding: 5px 0 0 4px; white-space: nowrap; }
.show input { appearance: none; width: 13px; height: 13px; margin-top: 3px; border: 1px solid; border-color: #a8f4e0 #2f7565 #2f7565 #a8f4e0; }
.acts { flex: none; display: flex; justify-content: flex-end; gap: 5px; padding: 2px 1px; }
.act { width: 29px; height: 29px; background: var(--cyan); border: 2px solid; border-color: #d2ffff #4f8888 #4f8888 #d2ffff; display: flex; flex-direction: column; align-items: center; position: relative; font: 10px/11px "Liberation Serif", serif; padding-top: 2px; }
.act::before { content: ""; position: absolute; inset: 1px; border: 1px solid #000; }
.act:nth-child(3) { width: 33px; font-size: 9px; }
.led { width: 7px; height: 7px; border-radius: 50%; border: 1px solid #000; background: #f01010; margin-top: 1px; }
.led.g { background: #10e010; }

.histo { left: 1104px; top: 459px; right: -4px; bottom: -4px; padding-left: 7px; background: linear-gradient(#3c3836, #6f6a66 12%, #2c2826 40%, #2c2826 80%, #c9c6a8 90%); display: flex; flex-direction: column; }
.histo .wbar { margin-left: -7px; background: linear-gradient(90deg, #5d5750, #726a61 30%, #2c2826 48%); }
.histo .xicon { opacity: 0.800; }
.histo .blob { width: 36px; background: #d8a244; }
.h1 { left: 174px; } .h2 { left: 216px; } .h3 { left: 258px; } .h4 { left: 299px; }
.histo .h2, .histo .h3 { background: #e08848; }
.histo .wtitle { text-shadow: 0 0 6px #b8b0a8; }
.histo .client { flex: 1; min-height: 0; display: flex; flex-direction: column; padding: 5px 0 0 3px; }
.hmain { flex: none; height: 287px; display: flex; gap: 3px; }
.hleft { width: 102px; flex: none; display: flex; flex-direction: column; background: var(--cyan); border: 1px solid #000; }
.radios { flex: none; height: 137px; border-bottom: 1px solid #000; padding-left: 4px; }
.radios label { display: flex; align-items: center; gap: 5px; height: 27px; }
.radios input { appearance: none; width: 11px; height: 11px; margin: 0 2px; transform: rotate(45deg); border: 2px solid; border-color: #c8f4f4 #5c9090 #5c9090 #c8f4f4; }
.radios input:checked { background: #c8004c; border-color: #5c6c78 #fff #fff #5c6c78; }
.hleft .list, .hleft .vscroll, .hright .list, .hright .vscroll, .hright .hscroll { --teal: #9cdcdc; border-color: #4f8888 #d2ffff #d2ffff #4f8888; }
.histo .list { padding: 3px 4px 0 2px; }
.histo .list .sel { color: #9cdcdc; }
.histo .vscroll, .histo .hscroll { background: #6ea6a6; width: 14px; }
.histo .vscroll b, .histo .hscroll b { border-color: #d2ffff #4f8888 #4f8888 #d2ffff; }
.histo .vscroll i::before, .histo .hscroll i::before { background: #9cdcdc; }
.hleft .acts { justify-content: flex-start; padding-left: 3px; height: 32px; }
.hright { flex: 1; min-width: 0; display: flex; flex-direction: column; background: var(--cyan); border: 1px solid #000; border-right: 0; overflow: hidden; }
.chart { flex: none; height: 204px; overflow: hidden; }
.chart text { font: bold 15px "Liberation Mono", monospace; }
.chart .ital { font-style: italic; }
.histo .hscroll { width: auto; }
.hlow { flex: 1; min-height: 0; display: flex; gap: 3px; border-top: 2px solid #000; border-bottom: 2px solid #000; }
.histo .hlow .list { flex: none; width: 92px; padding-top: 4px; }
.reso { flex: 1; border-left: 1px solid #000; display: grid; grid-template-rows: 22px 24px 14px; padding: 2px 0 0 4px; }
.reso label { justify-self: end; }
.reso output { padding-top: 3px; }
.reso input { appearance: none; width: 100%; height: 14px; background: #78b0b0; border: 1px solid #4f8888; }
.reso input::-webkit-slider-thumb { appearance: none; width: 29px; height: 11px; background: linear-gradient(90deg, #9cdcdc 13px, #4f8888 13px, #4f8888 14px, #d2ffff 14px, #9cdcdc 16px); border: 1px solid; border-color: #d2ffff #4f8888 #4f8888 #d2ffff; }
.hbottom { flex: 1; min-height: 0; margin: 4px 0 0 -3px; border-top: 1px solid #a8f4e0; padding: 5px 0 0 3px; }
.dash { height: 100%; margin-left: 93px; padding: 20px 16px 0 55px; border: 1px dashed #a03878; border-width: 1px 0 0 1px; }
.preview { width: 159px; height: 60px; background: var(--cyan); border: 2px solid #000; }

.pop { left: 817px; top: 155px; width: 419px; height: 312px; padding: 0 6px 6px 7px; border-radius: 7px; background: linear-gradient(#9f8f85 0, #a8a09a 30%, #5a4a40 31%, #5a4238 100%); }
.pop .wbar { height: 28px; margin: 0 -6px 0 -7px; background: linear-gradient(90deg, #8d8178 0, #c9c3bd 12%, #b8b0a8 20%, #85776b 30%, #4a3a2c 55%, #6b5b4e 75%, #94867c 100%); }
.pop .wclose { background: linear-gradient(#e09a8c, #c8503e 45%, #b02a18 50%, #d06048); border-color: #e8c8c0; width: 47px; height: 19px; }
.pop .client { display: grid; grid-template: 247px 28px / 1fr 36px; background: #000; }
.pview { border: 3px solid; border-color: #2f6b5b #a8f4e0 #a8f4e0 #2f6b5b; overflow: hidden; }
.pbtns { display: grid; grid-template-rows: repeat(7, 34px); gap: 1px; padding: 1px 1px 0 2px; }
.ptool { display: grid; place-items: center; background: linear-gradient(var(--cyan), var(--cyan)) content-box, var(--teal); padding: 1px; border: 2px solid; border-color: #7ce0cc #54b098 #54b098 #7ce0cc; }
.ptool svg { outline: 1px solid #000; }
.closebtn { grid-column: 1 / 3; margin: 1px; outline: 1px solid #54d0b0; }
</style>
